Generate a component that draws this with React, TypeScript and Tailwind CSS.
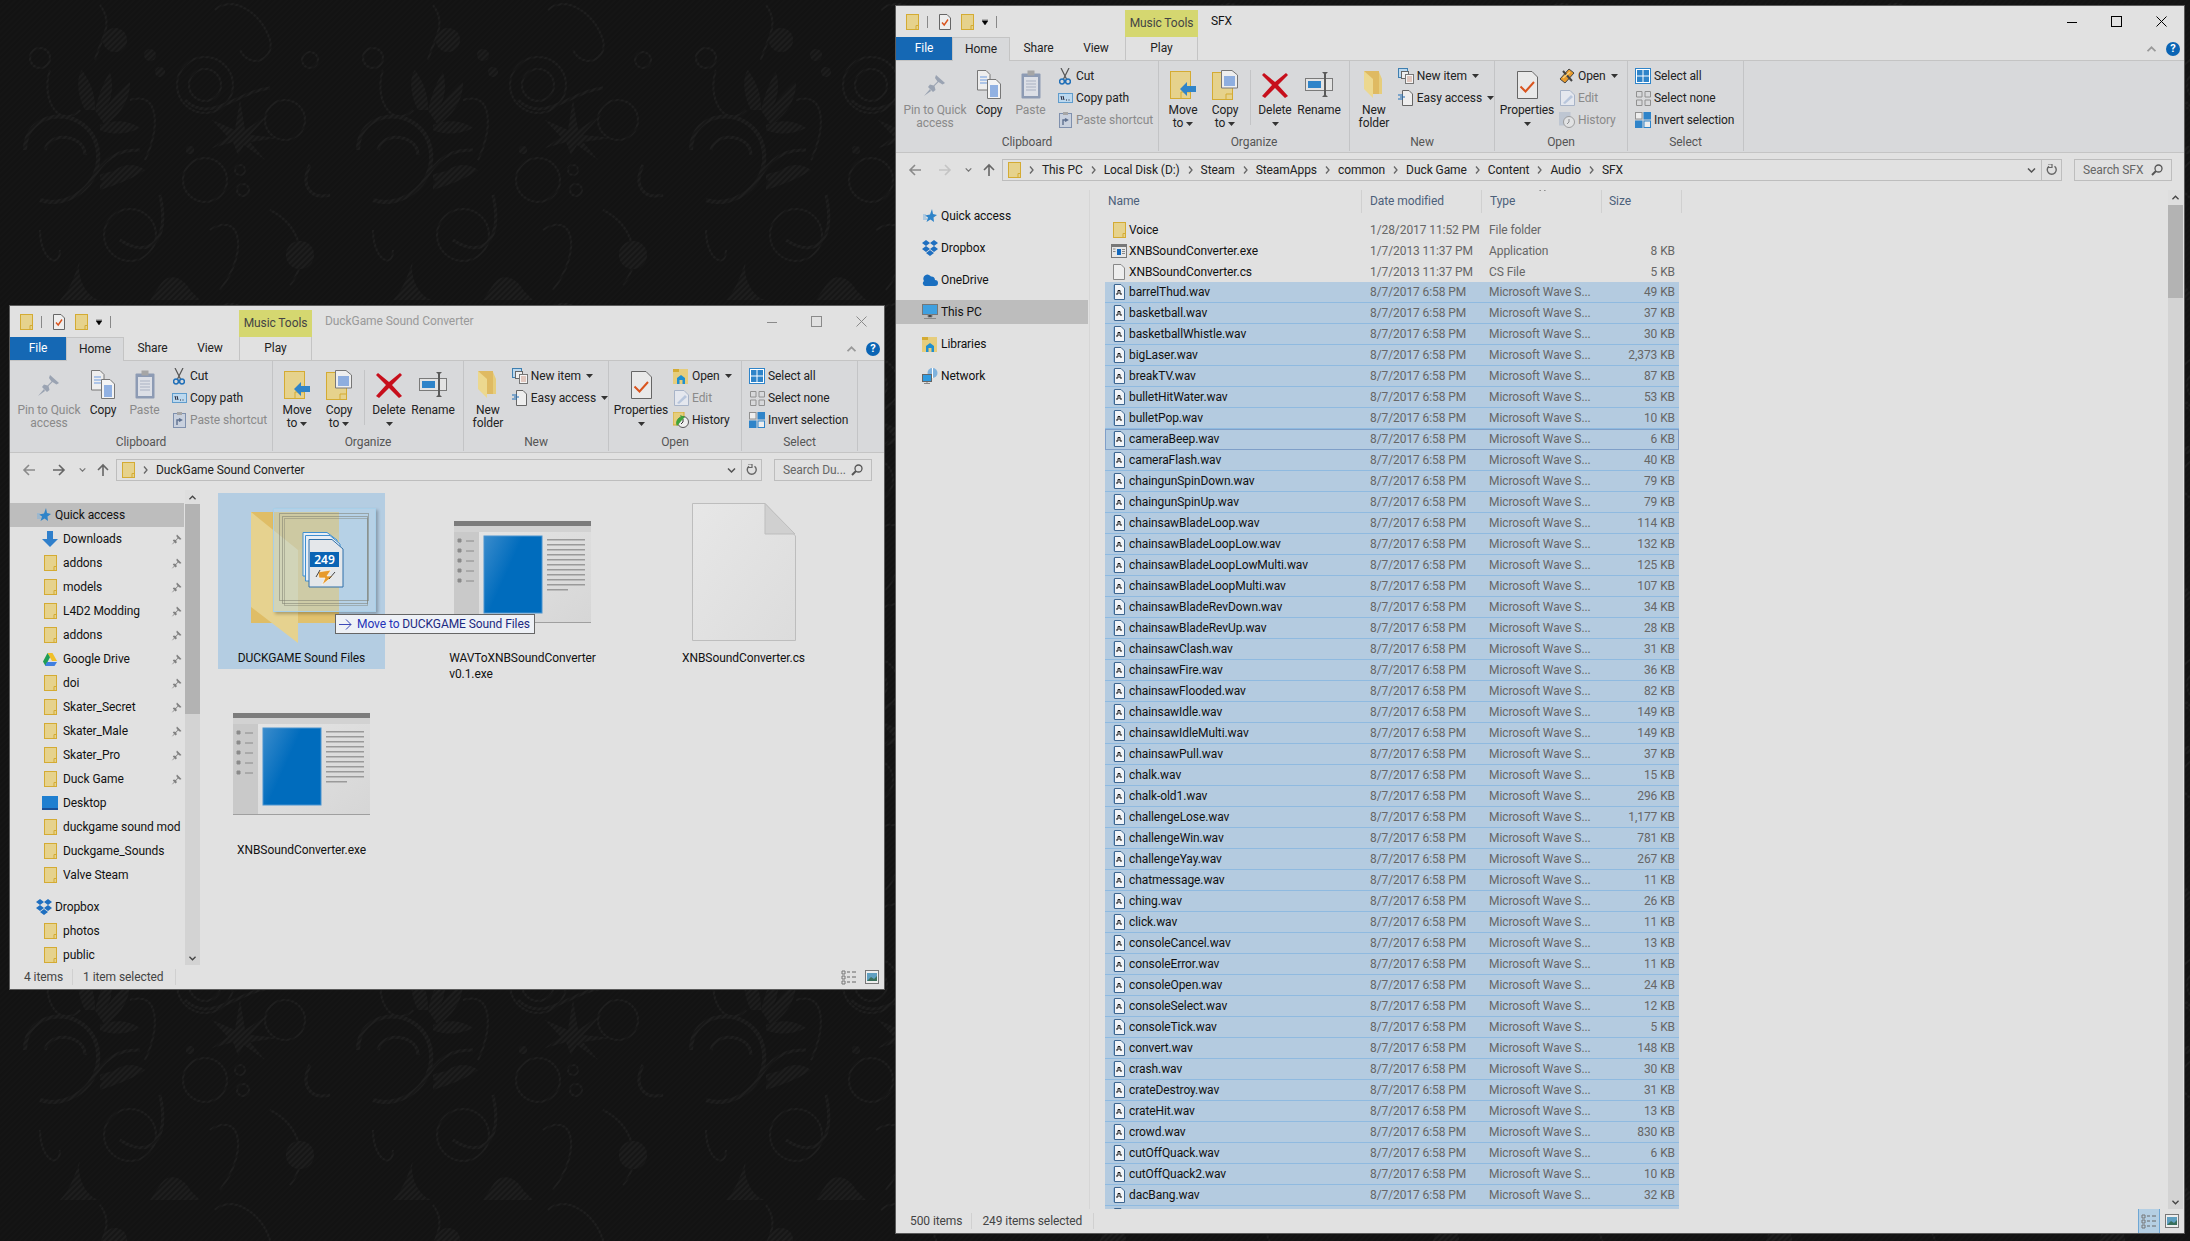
import React from "react";

type IconProps = { className?: string };

const FolderTiny = ({ className = "w-[13px] h-[16px]" }: IconProps) => (
  <svg viewBox="0 0 13 16" className={className}>
    <rect x="0.5" y="0.5" width="12" height="15" fill="#e6d28c" stroke="#d4ab33" />
    <path d="M10 15.5V11.5H12.5" fill="none" stroke="#d4ab33" />
  </svg>
);

const CheckDoc = () => (
  <svg viewBox="0 0 12 16" className="w-[12px] h-[16px]">
    <path d="M.5.5H8L11.5 4V15.5H.5Z" fill="#eee" stroke="#666" />
    <path d="M3 8.5L5.2 11L9 5.5" fill="none" stroke="#d9541e" strokeWidth="1.4" />
  </svg>
);

const PinBig = () => (
  <svg viewBox="0 0 24 24" className="w-[24px] h-[24px]">
    <path d="M13 2L22 10L19.5 11.5L15.5 9L11.5 13L12.5 17L10 19L5 14L7 11.5L10.5 12.5L14.5 8.5L12 5Z" fill="#9aa3b2" />
    <path d="M7 16L1 23L8 18Z" fill="#9aa3b2" />
  </svg>
);

const PinSmall = () => (
  <svg viewBox="0 0 11 11" className="w-[11px] h-[11px]">
    <path d="M6 .5L10.5 5L9 5.8L7.2 4.5L5.2 6.5L5.8 8.5L4.6 9.5L1.8 6.6L2.8 5.4L4.6 6L6.6 4L5.3 2.1Z" fill="#808080" />
    <path d="M3 8L.5 10.8L3.8 8.6Z" fill="#808080" />
  </svg>
);

const CopyBig = () => (
  <svg viewBox="0 0 24 29" className="w-[24px] h-[29px]">
    <path d="M.5.5H9L13 4.5V20H.5Z" fill="#eee" stroke="#777" />
    <path d="M3 7H10M3 10H10M3 13H10" stroke="#6d9be0" />
    <path d="M10.5 9.5H19L23.5 14V28.5H10.5Z" fill="#f4f4f4" stroke="#777" />
    <path d="M13 16H21M13 18H21M13 20H21M13 22H21M13 24H21M13 26H21" stroke="#2f6fd0" />
  </svg>
);

const PasteBig = () => (
  <svg viewBox="0 0 20 29" className="w-[20px] h-[29px]">
    <rect x=".5" y="3.5" width="19" height="25" rx="1" fill="#8d9bb4" />
    <rect x="3" y="7" width="14" height="19" fill="#dcdfe6" />
    <path d="M5 11H15M5 14H15M5 17H15M5 20H15" stroke="#a9b1c2" />
    <rect x="6.5" y=".5" width="7" height="5" fill="#a6a6a6" />
  </svg>
);

const Scissors = () => (
  <svg viewBox="0 0 12 17" className="w-[12px] h-[17px]">
    <path d="M2 0L7.5 11M10 0L4.5 11" stroke="#555" strokeWidth="1.2" />
    <circle cx="3" cy="13.5" r="2.4" fill="none" stroke="#1f6fb8" strokeWidth="1.5" />
    <circle cx="9" cy="13.5" r="2.4" fill="none" stroke="#1f6fb8" strokeWidth="1.5" />
  </svg>
);

const CopyPathIcon = () => (
  <svg viewBox="0 0 15 10" className="w-[15px] h-[10px]">
    <rect x=".5" y=".5" width="14" height="9" fill="#bcd8ee" stroke="#5f9ccc" />
    <path d="M3 3L4 7M5 3L6 7M8 7H9M10.5 7H11.5" stroke="#223" />
  </svg>
);

const PasteShortcut = () => (
  <svg viewBox="0 0 13 16" className="w-[13px] h-[16px]">
    <rect x=".5" y="1.5" width="12" height="14" fill="#c9d1de" stroke="#7f90ad" />
    <rect x="4" y="0" width="5" height="3" fill="#a6a6a6" />
    <path d="M4 13V8H8M6 6.5L8.5 8L6 9.5" fill="none" stroke="#5f7190" strokeWidth="1.4" />
  </svg>
);

const MoveToIcon = () => (
  <svg viewBox="0 0 27 28" className="w-[27px] h-[28px]">
    <rect x=".5" y=".5" width="20" height="27" fill="#e6d28c" stroke="#d4ab33" />
    <path d="M11 21V27M11 21H20" stroke="#d4ab33" fill="none" />
    <path d="M10 21L17 14V18H26V24H17V28Z" transform="translate(0 -3)" fill="#2f84c9" />
  </svg>
);

const CopyToIcon = () => (
  <svg viewBox="0 0 26 30" className="w-[26px] h-[30px]">
    <rect x=".5" y="2.5" width="20" height="27" fill="#e6d28c" stroke="#d4ab33" />
    <path d="M14 29V24H20" stroke="#d4ab33" fill="none" />
    <path d="M9.5.5H20L25.5 5V18H9.5Z" fill="#eee" stroke="#777" />
    <path d="M12 7H23M12 9H23M12 11H23M12 13H23M12 15H23" stroke="#2f6fd0" />
  </svg>
);

const DeleteIcon = () => (
  <svg viewBox="0 0 26 26" className="w-[26px] h-[26px]">
    <path d="M2 1L13 10L24 1L26 3L16 13L26 24L23 26L13 16L3 26L0 24L10 13L0 3Z" fill="#c70f1c" />
  </svg>
);

const RenameIcon = () => (
  <svg viewBox="0 0 28 27" className="w-[28px] h-[27px]">
    <rect x=".5" y="7.5" width="27" height="12" fill="#e3e3e3" stroke="#7a7a7a" />
    <rect x="3" y="10" width="13" height="7" fill="#2f84c9" />
    <path d="M17 1H23L21 3V24L23 26H17L19 24V3Z" fill="#5a5a5a" />
  </svg>
);

const NewFolderIcon = () => (
  <svg viewBox="0 0 19 27" className="w-[19px] h-[27px]">
    <path d="M0 0H15V23H6Z" fill="#dfba62" />
    <path d="M0 0L9 8V27L0 18Z" fill="#ecd88f" />
    <path d="M9 23H18V8L15 1V23Z" fill="#e6cd7c" />
  </svg>
);

const NewItemIcon = () => (
  <svg viewBox="0 0 16 16" className="w-[16px] h-[16px]">
    <rect x=".5" y=".5" width="9" height="9" fill="#bcd8ee" stroke="#3f7fb0" />
    <rect x="3.5" y="3.5" width="7" height="7" fill="#eee" stroke="#666" />
    <rect x="7.5" y="6.5" width="8" height="9" fill="#f4f4f4" stroke="#777" />
    <path d="M9 9H14M9 11H14M9 13H14" stroke="#c98" />
  </svg>
);

const EasyAccessIcon = () => (
  <svg viewBox="0 0 15 16" className="w-[15px] h-[16px]">
    <path d="M4.5.5H11L14.5 4V15.5H4.5Z" fill="#eee" stroke="#666" />
    <path d="M0 5H5M2 7H7M0 9H5" stroke="#1f6fb8" />
  </svg>
);

const PropertiesIcon = () => (
  <svg viewBox="0 0 21 28" className="w-[21px] h-[28px]">
    <path d="M.5.5H15L20.5 6V27.5H.5Z" fill="#e9e9e9" stroke="#666" />
    <path d="M3.5 15.5L8.5 20.5L17 11" fill="none" stroke="#d9541e" strokeWidth="2" />
  </svg>
);

const OpenOrange = () => (
  <svg viewBox="0 0 16 16" className="w-[16px] h-[16px]">
    <path d="M1 11L10 1L15 5L6 15Z" fill="#e79a2c" stroke="#444" />
    <path d="M4 3L13 13" stroke="#444" strokeWidth="2" />
    <path d="M4 10L11 4" stroke="#f6cf7a" strokeWidth="1.5" />
  </svg>
);

const LibraryIcon = () => (
  <svg viewBox="0 0 16 17" className="w-[16px] h-[17px]">
    <rect x="0" y="1" width="15" height="15" fill="#e6cd7c" />
    <rect x="0" y="1" width="6" height="3" fill="#d4ab33" />
    <path d="M4 16V10L8 7L12 10V16H9.5V12H6.5V16Z" fill="#1f8fd0" />
  </svg>
);

const EditIcon = () => (
  <svg viewBox="0 0 15 16" className="w-[15px] h-[16px]">
    <path d="M.5.5H10L14.5 5V15.5H.5Z" fill="#e4e7ee" stroke="#a8b4c8" />
    <path d="M3 13L11 5L13 7L5 14Z" fill="#b8c6dc" />
  </svg>
);

const HistoryIcon = ({ disabled }: { disabled?: boolean }) => (
  <svg viewBox="0 0 16 16" className="w-[16px] h-[16px]" opacity={disabled ? 0.45 : 1}>
    <rect x="0" y="0" width="11" height="13" fill={disabled ? "#9fb0c8" : "#e6cd7c"} stroke={disabled ? "#9fb0c8" : "#d4ab33"} />
    <circle cx="10" cy="10" r="5.5" fill="#eee" stroke="#555" />
    <path d="M10 7V10L8 12" fill="none" stroke="#333" />
    {!disabled && <path d="M4 14A6 6 0 0 1 8 5L7 3L12 5L9 8Z" fill="#3fa33a" />}
  </svg>
);

const SelectAllIcon = () => (
  <svg viewBox="0 0 16 16" className="w-[16px] h-[16px]">
    <rect x=".5" y=".5" width="15" height="15" fill="#fff" stroke="#2f84c9" />
    <rect x="2" y="2" width="5.5" height="5.5" fill="#2f84c9" />
    <rect x="8.5" y="2" width="5.5" height="5.5" fill="#2f84c9" />
    <rect x="2" y="8.5" width="5.5" height="5.5" fill="#2f84c9" />
    <rect x="8.5" y="8.5" width="5.5" height="5.5" fill="#2f84c9" />
  </svg>
);

const SelectNoneIcon = () => (
  <svg viewBox="0 0 15 15" className="w-[15px] h-[15px]">
    <path d="M.5.5H6V6H.5ZM9 .5H14.5V6H9ZM.5 9H6V14.5H.5ZM9 9H14.5V14.5H9Z" fill="none" stroke="#909090" />
  </svg>
);

const InvertIcon = () => (
  <svg viewBox="0 0 16 16" className="w-[16px] h-[16px]">
    <rect x=".5" y=".5" width="6.5" height="6.5" fill="#eee" stroke="#909090" />
    <rect x="9" y=".5" width="6.5" height="6.5" fill="#2f84c9" stroke="#2f84c9" />
    <rect x=".5" y="9" width="6.5" height="6.5" fill="#2f84c9" stroke="#2f84c9" />
    <rect x="9" y="9" width="6.5" height="6.5" fill="#eee" stroke="#2f84c9" />
  </svg>
);

const Caret = ({ muted }: { muted?: boolean }) => (
  <svg viewBox="0 0 7 4" className="inline-block w-[7px] h-[4px] align-middle">
    <path d="M0 0H7L3.5 4Z" fill={muted ? "#999" : "#333"} />
  </svg>
);

const StarIcon = () => (
  <svg viewBox="0 0 14 14" className="w-[14px] h-[14px]">
    <path d="M9 0L10 5L14 6L10.5 8.5L11 13L7.5 10.5L3.5 13L5 8.5L2 6.5L7 5.5Z" fill="#2f84c9" />
    <path d="M0 6H3M0 8H3M0 10H4" stroke="#7fb2dd" />
  </svg>
);

const DownloadIcon = () => (
  <svg viewBox="0 0 16 16" className="w-[16px] h-[16px]">
    <path d="M5 0H11V8H16L8 16L0 8H5Z" fill="#2f7fcb" />
  </svg>
);

const DriveIcon = () => (
  <svg viewBox="0 0 14 13" className="w-[14px] h-[13px]">
    <path d="M4.5 0H9.5L14 8H9Z" fill="#f0c02a" />
    <path d="M4.5 0L7 4.2L2.5 13L0 8.6Z" fill="#1f9d55" />
    <path d="M4 9H14L11.5 13H2Z" fill="#3f7fe0" />
  </svg>
);

const DesktopIcon = () => (
  <svg viewBox="0 0 16 16" className="w-[16px] h-[16px]">
    <rect width="16" height="14" y="1" fill="#1f7fd0" />
    <rect width="16" height="2" y="13" fill="#1a4f96" />
  </svg>
);

const DropboxIcon = () => (
  <svg viewBox="0 0 16 16" className="w-[16px] h-[16px]">
    <path d="M4 0L8 3L4 6L0 3ZM12 0L16 3L12 6L8 3ZM4 6L8 9L4 12L0 9ZM12 6L16 9L12 12L8 9ZM4 13L8 10L12 13L8 16Z" fill="#1f6fc0" />
  </svg>
);

const OneDriveIcon = () => (
  <svg viewBox="0 0 16 12" className="w-[16px] h-[12px]">
    <path d="M2 7A4 4 0 0 1 9 2.5A3.5 3.5 0 0 1 13 6A3 3 0 0 1 13 12H3A2.8 2.8 0 0 1 2 7Z" fill="#1a6fc0" />
  </svg>
);

const PcIcon = () => (
  <svg viewBox="0 0 16 16" className="w-[16px] h-[16px]">
    <rect x=".5" y=".5" width="15" height="10" fill="#3fa0e0" stroke="#777" />
    <path d="M6 11H10V13H6ZM2 14.5H14" stroke="#8a8a8a" />
  </svg>
);

const NetworkIcon = () => (
  <svg viewBox="0 0 16 16" className="w-[16px] h-[16px]">
    <circle cx="10.5" cy="5" r="5" fill="#7fb2dd" />
    <path d="M10.5 0V10" stroke="#fff" />
    <rect x=".5" y="6.5" width="9" height="7" fill="#2f9be0" stroke="#666" />
    <path d="M5 14V16M2 15.5H8" stroke="#888" />
  </svg>
);

const WaveIcon = () => (
  <svg viewBox="0 0 12 16" className="w-[12px] h-[16px]">
    <path d="M1.5 .5H8L11.5 4V15.5H1.5Z" fill="#f1f4f8" stroke="#3d6690" />
    <path d="M3 10H5V6.5H7V10H9" fill="none" stroke="#111" />
    <path d="M.5 1V15" stroke="#8fb4d8" />
  </svg>
);

const ExeSmall = () => (
  <svg viewBox="0 0 16 14" className="w-[16px] h-[14px]">
    <rect x=".5" y=".5" width="15" height="13" fill="#e6e6e6" stroke="#777" />
    <rect x="1" y="1" width="14" height="2" fill="#777" />
    <rect x="6" y="5" width="4" height="6" fill="#1268bd" />
    <path d="M11 5.5H14M11 7.5H14M11 9.5H14M2 5H4.5M2 7.5H4.5" stroke="#888" />
  </svg>
);

const PageSmall = () => (
  <svg viewBox="0 0 12 16" className="w-[12px] h-[16px]">
    <path d="M.5.5H8L11.5 4V15.5H.5Z" fill="#eee" stroke="#888" />
  </svg>
);

const ExeThumb = () => (
  <svg viewBox="0 0 137 102" className="w-[137px] h-[102px]">
    <defs>
      <linearGradient id="exeBlue" x1="0" y1="0" x2="1" y2="0.6">
        <stop offset="0" stopColor="#3b8ccc" />
        <stop offset="0.5" stopColor="#006cbd" />
      </linearGradient>
      <linearGradient id="exeBody" x1="0" y1="0" x2="1" y2="1">
        <stop offset="0" stopColor="#e6e6e6" />
        <stop offset="1" stopColor="#d6d6d6" />
      </linearGradient>
    </defs>
    <rect width="137" height="102" fill="url(#exeBody)" />
    <rect width="137" height="5" fill="#7c7c7c" />
    <rect y="5" width="137" height="6" fill="#d2d2d2" />
    <rect y="11" width="25" height="90" fill="#c9c9c9" />
    <rect x="30" y="15" width="58" height="77" fill="url(#exeBlue)" stroke="#4b94d0" />
    {[18, 28, 38, 48, 58].map((y) => (
      <path key={y} d="M4 0H7V3H4ZM12 2H20" transform={`translate(0 ${y})`} fill="#8a8a8a" stroke="#8a8a8a" strokeWidth="1" />
    ))}
    {[18, 23, 28, 33, 38, 43, 48, 53, 58, 63].map((y) => (
      <rect key={y} x="93" y={y} width="38" height="1.5" fill="#9a9a9a" />
    ))}
    <rect x="93" y="68" width="21" height="1.5" fill="#9a9a9a" />
    <rect y="101" width="137" height="1" fill="#9f9f9f" />
  </svg>
);

const PageThumb = () => (
  <svg viewBox="0 0 104 138" className="w-[104px] h-[138px]">
    <defs>
      <linearGradient id="pageFill" x1="0" y1="0" x2="1" y2="1">
        <stop offset="0" stopColor="#e7e7e7" />
        <stop offset="1" stopColor="#dcdcdc" />
      </linearGradient>
    </defs>
    <path d="M.5.5H73L103.5 33V137.5H.5Z" fill="url(#pageFill)" stroke="#bdbdbd" />
    <path d="M73 .5V31H103Z" fill="#d0d0d0" stroke="#bdbdbd" />
  </svg>
);

const DragFolder = () => (
  <div className="absolute left-[33px] top-[19px] w-[125px] h-[131px]">
    <svg viewBox="0 0 88 131" className="absolute left-0 top-0 w-[88px] h-[131px]">
      <path d="M0 0H88V111H47V111H0Z" fill="#dfbd66" />
      <path d="M0 0L47 38V131L0 95Z" fill="#e6d28f" />
      <path d="M47 38L88 20V111H47Z" fill="#e4c777" opacity="0.4" />
    </svg>
    <div className="absolute left-[22px] top-[-4px] w-[103px] h-[104px] bg-[#b8d6ea]/45 border border-[#a8cfe8] shadow-[2px_2px_3px_rgba(0,0,0,0.25)]">
      <div className="absolute left-[5px] top-[4px] w-[90px] h-[88px] border border-[#77776a]/50" />
      <div className="absolute left-[8px] top-[7px] w-[86px] h-[88px] border border-[#77776a]/50" />
      <div className="absolute left-[10px] top-[9px] w-[84px] h-[88px] border border-[#77776a]/40" />
      <svg viewBox="0 0 42 56" className="absolute left-[28px] top-[23px] w-[42px] h-[56px]">
        <path d="M1 .5H25L35 8V44H1Z" fill="#e8eef5" stroke="#3f8fd0" />
        <path d="M3.5 3.5H28L38 12V49H3.5Z" fill="#e8eef5" stroke="#3f8fd0" />
        <path d="M7 7.5H30L41 17V55H7Z" fill="#e4e7ea" stroke="#2f6fa8" />
        <rect x="8" y="20" width="29" height="15" fill="#0a64b4" />
        <text x="22.5" y="32" textAnchor="middle" fontSize="12" fontWeight="600" fill="#fff" fontFamily="'Noto Sans', sans-serif">249</text>
        <path d="M16 40L29 38L25 44H31L20 53L23 46H17Z" fill="#e79a2c" stroke="#fff" strokeWidth="0.6" />
        <path d="M14 45L18 38M27 47L33 40" stroke="#444" />
      </svg>
    </div>
  </div>
);

const NavArrow = ({ dir, color }: { dir: "left" | "right" | "up"; color: string }) => (
  <svg viewBox="0 0 14 14" className="w-[14px] h-[14px]">
    {dir === "left" && <path d="M13 7H2M7 2L2 7L7 12" fill="none" stroke={color} strokeWidth="1.6" />}
    {dir === "right" && <path d="M1 7H12M7 2L12 7L7 12" fill="none" stroke={color} strokeWidth="1.6" />}
    {dir === "up" && <path d="M7 13V2M2 7L7 2L12 7" fill="none" stroke={color} strokeWidth="1.6" />}
  </svg>
);

const Chevron = ({ up, className = "w-[8px] h-[5px]", color = "#555" }: { up?: boolean; className?: string; color?: string }) => (
  <svg viewBox="0 0 8 5" className={className}>
    <path d={up ? "M0.5 4.5L4 1L7.5 4.5" : "M0.5 0.5L4 4L7.5 0.5"} fill="none" stroke={color} strokeWidth="1.5" />
  </svg>
);

const CrumbSep = () => (
  <svg viewBox="0 0 5 8" className="w-[5px] h-[8px] mx-[8px]">
    <path d="M1 .5L4 4L1 7.5" fill="none" stroke="#666" strokeWidth="1.3" />
  </svg>
);

const Refresh = () => (
  <svg viewBox="0 0 12 12" className="w-[12px] h-[12px]">
    <path d="M8.5 2.2A4.5 4.5 0 1 1 3 2.2" fill="none" stroke="#666" strokeWidth="1.4" />
    <path d="M2 0H6V3.5H2" fill="none" stroke="#666" strokeWidth="1.2" />
  </svg>
);

const SearchIcon = () => (
  <svg viewBox="0 0 12 12" className="w-[12px] h-[12px]">
    <circle cx="7.5" cy="4.5" r="3.5" fill="none" stroke="#555" strokeWidth="1.3" />
    <path d="M5 7L1 11" stroke="#555" strokeWidth="2" />
  </svg>
);

const ViewIcons = ({ details }: { details?: boolean }) => (
  <div className="ml-auto flex items-center h-full">
    <div className={details ? "w-[22px] h-[24px] flex items-center justify-center bg-[#b5cfe3] border-x border-[#6ea6d4]" : "w-[22px] h-[24px] flex items-center justify-center"}>
      <svg viewBox="0 0 16 15" className="w-[16px] h-[15px]">
        <path d="M1 1H4V4H1ZM1 6H4V9H1ZM1 11H4V14H1Z" fill="none" stroke="#777" />
        <path d="M6 2H9M11 2H15M6 7H9M11 7H15M6 12H9M11 12H15" stroke="#666" />
      </svg>
    </div>
    <div className="w-[24px] h-[24px] flex items-center justify-center">
      <svg viewBox="0 0 14 14" className="w-[14px] h-[14px]">
        <rect x=".5" y=".5" width="13" height="13" fill="#eee" stroke="#777" />
        <rect x="2" y="3" width="10" height="8" fill="#5f9fc0" />
        <path d="M2 11L6 7L9 9L12 6V11Z" fill="#3a6f5a" />
      </svg>
    </div>
  </div>
);

const BigButton = ({ icon, label, width, disabled, caret }: { icon: React.ReactNode; label: string; width: string; disabled?: boolean; caret?: boolean }) => (
  <div className={`${width} flex flex-col items-center`}>
    <div className="h-[39px] flex items-center justify-center shrink-0">{icon}</div>
    <div className={disabled ? "text-center leading-[13px] whitespace-pre-line text-[#8a8a8a]" : "text-center leading-[13px] whitespace-pre-line text-[#222]"}>
      {label}
      {caret && (
        <>
          {" "}
          <Caret />
        </>
      )}
    </div>
  </div>
);

const SmallButton = ({ icon, label, disabled, caret }: { icon: React.ReactNode; label: string; disabled?: boolean; caret?: boolean }) => (
  <div className="h-[22px] flex items-center whitespace-nowrap">
    <span className="w-[16px] flex justify-center shrink-0">{icon}</span>
    <span className={disabled ? "ml-[3px] text-[#8a8a8a]" : "ml-[3px] text-[#222]"}>{label}</span>
    {caret && (
      <span className="ml-[5px] flex">
        <Caret />
      </span>
    )}
  </div>
);

const Group = ({ label, width, children }: { label: string; width: string; children: React.ReactNode }) => (
  <div className={`${width} h-full flex flex-col border-r border-[#c3c4c6] shrink-0`}>
    <div className="flex-1 flex pt-[4px]">{children}</div>
    <div className="h-[18px] leading-[18px] text-center text-[#555]">{label}</div>
  </div>
);

const Ribbon = ({ sfx }: { sfx?: boolean }) => (
  <div className="h-[92px] bg-[#d8d9db] border-b border-[#c4c4c4] flex shrink-0 pb-[1px]">
    <Group label="Clipboard" width="w-[263px]">
      <BigButton width="w-[78px]" icon={<PinBig />} label={"Pin to Quick\naccess"} disabled />
      <BigButton width="w-[30px]" icon={<CopyBig />} label="Copy" />
      <BigButton width="w-[53px]" icon={<PasteBig />} label="Paste" disabled />
      <div className="flex flex-col">
        <SmallButton icon={<Scissors />} label="Cut" />
        <SmallButton icon={<CopyPathIcon />} label="Copy path" />
        <SmallButton icon={<PasteShortcut />} label="Paste shortcut" disabled />
      </div>
    </Group>
    <Group label="Organize" width="w-[191px]">
      <BigButton width="w-[48px]" icon={<MoveToIcon />} label={"Move\nto"} caret />
      <BigButton width="w-[36px]" icon={<CopyToIcon />} label={"Copy\nto"} caret />
      <div className="w-[8px] h-[55px] border-r border-[#c3c4c6] mt-[5px]" />
      <BigButton width="w-[48px]" icon={<DeleteIcon />} label={"Delete\n"} caret />
      <BigButton width="w-[40px]" icon={<RenameIcon />} label="Rename" />
    </Group>
    <Group label="New" width="w-[145px]">
      <BigButton width="w-[48px]" icon={<NewFolderIcon />} label={"New\nfolder"} />
      <div className="flex flex-col">
        <SmallButton icon={<NewItemIcon />} label="New item" caret />
        <SmallButton icon={<EasyAccessIcon />} label="Easy access" caret />
      </div>
    </Group>
    <Group label="Open" width="w-[133px]">
      <BigButton width="w-[64px]" icon={<PropertiesIcon />} label={"Properties\n"} caret />
      <div className="flex flex-col">
        <SmallButton icon={sfx ? <OpenOrange /> : <LibraryIcon />} label="Open" caret />
        <SmallButton icon={<EditIcon />} label="Edit" disabled />
        <SmallButton icon={<HistoryIcon disabled={sfx} />} label="History" disabled={sfx} />
      </div>
    </Group>
    <Group label="Select" width="w-[116px]">
      <div className="flex flex-col pl-[7px]">
        <SmallButton icon={<SelectAllIcon />} label="Select all" />
        <SmallButton icon={<SelectNoneIcon />} label="Select none" />
        <SmallButton icon={<InvertIcon />} label="Invert selection" />
      </div>
    </Group>
  </div>
);

const Scrollbar = ({ thumb, arrow }: { thumb: string; arrow: string }) => (
  <div className="w-[15px] h-full bg-[#d3d3d3] flex flex-col shrink-0">
    <div className={`${arrow} flex items-center justify-center bg-[#dedede]`}>
      <Chevron up className="w-[7px] h-[5px]" color="#444" />
    </div>
    <div className={`${thumb} bg-[#b3b3b3]`} />
    <div className="flex-1" />
    <div className="h-[14px] flex items-center justify-center">
      <Chevron className="w-[7px] h-[5px]" color="#444" />
    </div>
  </div>
);

const NavRow = ({ icon, label, indent, pinned, selected }: { icon: React.ReactNode; label: string; indent?: boolean; pinned?: boolean; selected?: boolean }) => (
  <div className={`h-[24px] flex items-center whitespace-nowrap overflow-hidden ${selected ? "bg-[#bdbdbd] mr-[1px]" : ""} ${indent ? "pl-[32px]" : "pl-[26px]"}`}>
    <span className="w-[16px] flex justify-center shrink-0">{icon}</span>
    <span className={indent ? "ml-[5px] text-[#111]" : "ml-[3px] text-[#111]"}>{label}</span>
    {pinned && (
      <span className="ml-auto pr-[3px] flex">
        <PinSmall />
      </span>
    )}
  </div>
);

const WindowFrame = ({ className, title, active, sfx, children, address, search, status, details }: { className: string; title: string; active?: boolean; sfx?: boolean; children: React.ReactNode; address: React.ReactNode; search: string; status: string[]; details?: boolean }) => {
  const ctl = active ? "#000" : "#8a8a8a";
  return (
    <div className={`absolute ${className} bg-[#e1e1e1] border border-[#5a5a5a] flex flex-col overflow-hidden`}>
      {/* title row */}
      <div className="h-[31px] flex shrink-0">
        <div className="w-[229px] flex items-center pl-[10px] shrink-0">
          <FolderTiny />
          <span className="w-[1px] h-[12px] bg-[#888] ml-[8px]" />
          <span className="ml-[11px] flex">
            <CheckDoc />
          </span>
          <span className="ml-[10px] flex">
            <FolderTiny />
          </span>
          <svg viewBox="0 0 7 7" className="w-[6px] h-[6px] ml-[8px]">
            <path d="M0 0H7M0 2H7L3.5 7Z" fill="#000" stroke="#000" strokeWidth="0.5" />
          </svg>
          <span className="w-[1px] h-[12px] bg-[#888] ml-[8px]" />
        </div>
        <div className="w-[73px] h-[27px] mt-[4px] bg-[#d5d770] text-[#444] text-center leading-[27px] shrink-0">Music Tools</div>
        <div className={active ? "pl-[13px] leading-[31px] text-[#111]" : "pl-[13px] leading-[31px] text-[#999]"}>{title}</div>
        <div className="ml-auto flex items-center h-full pr-[17px] gap-[34px]">
          <svg viewBox="0 0 10 10" className="w-[10px] h-[10px]">
            <path d="M0 5.5H10" stroke={ctl} />
          </svg>
          <svg viewBox="0 0 11 11" className="w-[11px] h-[11px]">
            <rect x=".5" y=".5" width="10" height="10" fill="none" stroke={ctl} />
          </svg>
          <svg viewBox="0 0 11 11" className="w-[11px] h-[11px]">
            <path d="M.5.5L10.5 10.5M10.5.5L.5 10.5" stroke={ctl} />
          </svg>
        </div>
      </div>
      {/* tabs */}
      <div className="h-[24px] flex shrink-0 border-b border-[#c4c4c4] text-[#222]">
        <div className="w-[56px] bg-[#1568b4] text-white text-center leading-[23px]">File</div>
        <div className="w-[58px] bg-[#d8d9db] border-x border-t border-[#c4c4c4] h-[24px] text-center leading-[23px] relative z-10">Home</div>
        <div className="w-[57px] text-center leading-[23px]">Share</div>
        <div className="w-[58px] text-center leading-[23px]">View</div>
        <div className="w-[73px] border-x border-[#c4c4c4] text-center leading-[23px]">Play</div>
        <div className="ml-auto flex items-center pr-[4px]">
          <Chevron up className="w-[9px] h-[6px]" color="#999" />
          <span className="ml-[10px] w-[14px] h-[14px] rounded-full bg-[#0a64b4] text-white text-[11px] font-bold leading-[14px] text-center">?</span>
        </div>
      </div>
      <Ribbon sfx={sfx} />
      {/* address row */}
      <div className="h-[37px] flex items-start pt-[6px] shrink-0">
        <div className="w-[106px] h-[22px] flex items-center pl-[12px] shrink-0">
          <NavArrow dir="left" color="#8a8a8a" />
          <span className="ml-[16px] flex">
            <NavArrow dir="right" color={active ? "#c4c4c4" : "#666"} />
          </span>
          <span className="ml-[13px] flex">
            <Chevron className="w-[7px] h-[4px]" color="#777" />
          </span>
          <span className="ml-[10px] flex">
            <NavArrow dir="up" color="#666" />
          </span>
        </div>
        <div className="flex-1 h-[22px] border border-[#bdbdbd] flex items-center pl-[5px] min-w-0">
          <FolderTiny />
          {address}
          <div className="ml-auto flex items-center h-full">
            <Chevron className="w-[9px] h-[5px] mr-[5px]" color="#555" />
            <div className="w-[20px] h-full border-l border-[#bdbdbd] flex items-center justify-center">
              <Refresh />
            </div>
          </div>
        </div>
        <div className="w-[98px] h-[22px] border border-[#bdbdbd] ml-[12px] mr-[12px] flex items-center justify-between px-[8px] text-[#666] shrink-0">
          <span>{search}</span>
          <SearchIcon />
        </div>
      </div>
      <div className="flex-1 flex min-h-0">{children}</div>
      {/* status bar */}
      <div className="h-[24px] flex items-center shrink-0 text-[#444]">
        <span className="pl-[14px] pr-[9px] border-r border-[#d0d0d0] leading-[16px]">{status[0]}</span>
        <span className="pl-[10px] pr-[11px] border-r border-[#d0d0d0] leading-[16px]">{status[1]}</span>
        <ViewIcons details={details} />
      </div>
    </div>
  );
};

const quickAccess: [string, React.ReactNode, boolean][] = [
  ["Downloads", <DownloadIcon />, true],
  ["addons", <FolderTiny />, true],
  ["models", <FolderTiny />, true],
  ["L4D2 Modding", <FolderTiny />, true],
  ["addons", <FolderTiny />, true],
  ["Google Drive", <DriveIcon />, true],
  ["doi", <FolderTiny />, true],
  ["Skater_Secret", <FolderTiny />, true],
  ["Skater_Male", <FolderTiny />, true],
  ["Skater_Pro", <FolderTiny />, true],
  ["Duck Game", <FolderTiny />, true],
  ["Desktop", <DesktopIcon />, false],
  ["duckgame sound mod", <FolderTiny />, false],
  ["Duckgame_Sounds", <FolderTiny />, false],
  ["Valve Steam", <FolderTiny />, false],
];

const IconTile = ({ label, selected, children }: { label: string; selected?: boolean; children: React.ReactNode }) => (
  <div className={`relative w-[167px] h-[176px] ${selected ? "bg-[#b4cde2]" : ""}`}>
    <div className="h-[157px] flex items-center justify-center pt-[1px]">{children}</div>
    <div className="flex justify-center leading-[16px]">
      <div className="text-[#111] whitespace-pre-line">{label}</div>
    </div>
  </div>
);

const ConverterWindow = () => (
  <WindowFrame
    className="left-[9px] top-[305px] w-[876px] h-[685px]"
    title="DuckGame Sound Converter"
    search="Search Du..."
    status={["4 items", "1 item selected"]}
    address={
      <>
        <CrumbSep />
        <span className="text-[#222] whitespace-nowrap">DuckGame Sound Converter</span>
      </>
    }
  >
    <div className="w-[175px] pt-[13px] overflow-hidden shrink-0">
      <NavRow icon={<StarIcon />} label="Quick access" selected />
      {quickAccess.map(([name, icon, pinned], i) => (
        <NavRow key={i} indent icon={icon} label={name} pinned={pinned} />
      ))}
      <div className="h-[8px]" />
      <NavRow icon={<DropboxIcon />} label="Dropbox" />
      <NavRow indent icon={<FolderTiny />} label="photos" />
      <NavRow indent icon={<FolderTiny />} label="public" />
    </div>
    <Scrollbar thumb="h-[210px]" arrow="h-[14px]" />
    <div className="flex-1 pl-[18px] pt-[3px] grid grid-cols-[167px_167px_167px] auto-rows-[176px] gap-x-[54px] gap-y-[16px] content-start relative">
      <IconTile label="DUCKGAME Sound Files" selected>
        <DragFolder />
        <div className="absolute left-[117px] top-[121px] h-[20px] w-[200px] flex items-center bg-[#eef1f6] border border-[#666] z-10 whitespace-nowrap pl-[3px]">
          <svg viewBox="0 0 13 11" className="w-[13px] h-[11px] mr-[5px]">
            <path d="M0 5.5H12M7 .5L12 5.5L7 10.5" fill="none" stroke="#3b48b8" />
          </svg>
          <span className="text-[#2433b8]">Move to&nbsp;</span>
          <span className="text-[#1c2a80]">DUCKGAME Sound Files</span>
        </div>
      </IconTile>
      <IconTile label={"WAVToXNBSoundConverter\nv0.1.exe"}>
        <ExeThumb />
      </IconTile>
      <IconTile label="XNBSoundConverter.cs">
        <PageThumb />
      </IconTile>
      <IconTile label="XNBSoundConverter.exe">
        <ExeThumb />
      </IconTile>
    </div>
  </WindowFrame>
);

const crumbs = ["This PC", "Local Disk (D:)", "Steam", "SteamApps", "common", "Duck Game", "Content", "Audio", "SFX"];

const waves: [string, string][] = [
  ["barrelThud", "49"], ["basketball", "37"], ["basketballWhistle", "30"], ["bigLaser", "2,373"], ["breakTV", "87"],
  ["bulletHitWater", "53"], ["bulletPop", "10"], ["cameraBeep", "6"], ["cameraFlash", "40"], ["chaingunSpinDown", "79"],
  ["chaingunSpinUp", "79"], ["chainsawBladeLoop", "114"], ["chainsawBladeLoopLow", "132"], ["chainsawBladeLoopLowMulti", "125"],
  ["chainsawBladeLoopMulti", "107"], ["chainsawBladeRevDown", "34"], ["chainsawBladeRevUp", "28"], ["chainsawClash", "31"],
  ["chainsawFire", "36"], ["chainsawFlooded", "82"], ["chainsawIdle", "149"], ["chainsawIdleMulti", "149"], ["chainsawPull", "37"],
  ["chalk", "15"], ["chalk-old1", "296"], ["challengeLose", "1,177"], ["challengeWin", "781"], ["challengeYay", "267"],
  ["chatmessage", "11"], ["ching", "26"], ["click", "11"], ["consoleCancel", "13"], ["consoleError", "11"], ["consoleOpen", "24"],
  ["consoleSelect", "12"], ["consoleTick", "5"], ["convert", "148"], ["crash", "30"], ["crateDestroy", "31"], ["crateHit", "13"],
  ["crowd", "830"], ["cutOffQuack", "6"], ["cutOffQuack2", "10"], ["dacBang", "32"],
];

const FileRow = ({ icon, name, date, type, size, selected, focused }: { icon: React.ReactNode; name: string; date: string; type: string; size: string; selected?: boolean; focused?: boolean }) => (
  <div className={`h-[21px] w-[574px] flex items-center whitespace-nowrap ${selected ? "bg-[#b4cbe0] border-b border-[#8fbae0]" : ""} ${focused ? "outline outline-[#7f9fc8] -outline-offset-1" : ""}`}>
    <span className="w-[24px] pl-[4px] flex justify-center shrink-0">{icon}</span>
    <span className="w-[241px] text-[#111] shrink-0">{name}</span>
    <span className="w-[119px] text-[#666] shrink-0">{date}</span>
    <span className="w-[114px] text-[#666] shrink-0">{type}</span>
    <span className="w-[72px] text-[#666] text-right shrink-0">{size}</span>
  </div>
);

const SfxWindow = () => (
  <WindowFrame
    className="left-[895px] top-[5px] w-[1290px] h-[1229px]"
    title="SFX"
    active
    sfx
    details
    search="Search SFX"
    status={["500 items", "249 items selected"]}
    address={
      <div className="flex items-center whitespace-nowrap text-[#222]">
        {crumbs.map((c) => (
          <React.Fragment key={c}>
            <CrumbSep />
            <span>{c}</span>
          </React.Fragment>
        ))}
      </div>
    }
  >
    <div className="w-[194px] pt-[14px] flex flex-col gap-[8px] border-r border-[#d6d6d6] shrink-0">
      <NavRow icon={<StarIcon />} label="Quick access" />
      <NavRow icon={<DropboxIcon />} label="Dropbox" />
      <NavRow icon={<OneDriveIcon />} label="OneDrive" />
      <NavRow icon={<PcIcon />} label="This PC" selected />
      <NavRow icon={<LibraryIcon />} label="Libraries" />
      <NavRow icon={<NetworkIcon />} label="Network" />
    </div>
    <div className="flex-1 flex flex-col min-w-0 pl-[15px] overflow-hidden">
      <div className="h-[23px] flex text-[#4c607a] shrink-0">
        <div className="w-[257px] pl-[3px] border-r border-[#d0d0d0] leading-[23px]">Name</div>
        <div className="w-[120px] pl-[8px] border-r border-[#d0d0d0] leading-[23px]">Date modified</div>
        <div className="relative w-[120px] pl-[8px] border-r border-[#d0d0d0] leading-[23px]">
          Type
          <span className="absolute left-[57px] top-[-3px] flex">
            <Chevron up className="w-[7px] h-[4px]" color="#666" />
          </span>
        </div>
        <div className="w-[80px] pl-[7px] border-r border-[#d0d0d0] leading-[23px]">Size</div>
      </div>
      <div className="flex-1 pt-[6px] overflow-hidden">
        <FileRow icon={<FolderTiny />} name="Voice" date="1/28/2017 11:52 PM" type="File folder" size="" />
        <FileRow icon={<ExeSmall />} name="XNBSoundConverter.exe" date="1/7/2013 11:37 PM" type="Application" size="8 KB" />
        <FileRow icon={<PageSmall />} name="XNBSoundConverter.cs" date="1/7/2013 11:37 PM" type="CS File" size="5 KB" />
        {waves.map(([name, kb]) => (
          <FileRow key={name} selected focused={name === "cameraBeep"} icon={<WaveIcon />} name={`${name}.wav`} date="8/7/2017 6:58 PM" type="Microsoft Wave S..." size={`${kb} KB`} />
        ))}
        <FileRow selected icon={<WaveIcon />} name="" date="" type="" size="" />
      </div>
    </div>
    <div className="pr-[1px] shrink-0 h-full flex">
      <Scrollbar thumb="h-[93px]" arrow="h-[15px]" />
    </div>
  </WindowFrame>
);

// damask wallpaper, one tile repeated
const Wallpaper = () => (
  <svg className="absolute inset-0 w-full h-full">
    <defs>
      <pattern id="stripes" width="4" height="4" patternUnits="userSpaceOnUse" patternTransform="rotate(45)">
        <rect width="2" height="4" fill="#111" />
      </pattern>
      <pattern id="damask" width="333" height="300" patternUnits="userSpaceOnUse">
        <g fill="none" stroke="#1f1f1f" strokeWidth="2">
          <path d="M25 150C25 110 80 105 95 140C110 180 70 210 40 200" strokeWidth="4" />
          <path d="M45 150C50 130 85 135 85 155" strokeWidth="3" />
          <path d="M95 175C110 150 130 150 140 150" strokeWidth="3" />
          <path d="M50 70C40 100 60 130 80 110" />
          <circle cx="40" cy="58" r="10" />
          <path d="M130 100C160 90 160 130 145 160" />
          <circle cx="205" cy="85" r="28" />
          <circle cx="205" cy="85" r="16" />
          <path d="M185 100C210 125 240 90 270 88" strokeWidth="3" />
          <circle cx="285" cy="120" r="20" />
          <circle cx="310" cy="60" r="8" />
          <circle cx="240" cy="170" r="5" />
          <circle cx="243" cy="190" r="6" />
          <path d="M310 165C300 185 310 200 330 195" strokeWidth="3" />
          <path d="M210 230C240 210 250 250 220 290" />
          <path d="M40 230C40 260 60 270 60 250" />
          <path d="M160 195C170 240 150 260 120 240" strokeWidth="3" />
          <path d="M215 10C230 -5 260 10 270 40C275 60 250 70 240 50" />
          <path d="M100 5C115 25 100 40 95 60" />
          <circle cx="205" cy="180" r="22" />
          <circle cx="130" cy="235" r="26" />
          <path d="M270 210C300 225 310 260 290 285" />
        </g>
        <g fill="#1e1e1e">
          <path d="M85 110C75 90 78 75 82 70C92 85 95 95 95 110Z" />
          <path d="M95 110C100 90 105 80 110 72C115 90 110 105 100 118Z" />
          <path d="M100 118C110 100 120 90 130 82C130 100 120 115 105 125Z" />
          <path d="M100 125C120 118 130 122 140 128C125 135 110 135 100 130Z" />
          <path d="M100 185C115 165 130 160 145 170C130 180 115 185 100 190Z" />
          <path d="M100 175C110 170 125 170 130 178C120 182 110 182 100 180Z" />
          <path d="M235 130L240 100L245 130L268 115L250 135L278 138L250 142L265 160L244 145L238 155L233 142L212 148L228 137L212 120Z" />
          <circle cx="150" cy="55" r="6" />
          <circle cx="160" cy="72" r="5" />
          <circle cx="115" cy="40" r="12" />
          <circle cx="190" cy="150" r="4" />
          <circle cx="300" cy="255" r="14" />
          <path d="M80 260C75 280 90 300 100 300L60 300C70 290 75 275 80 260Z" />
          <path d="M160 285C170 270 185 280 190 290L200 300H150Z" />
        </g>
      </pattern>
    </defs>
    <rect width="100%" height="100%" fill="url(#damask)" />
    <rect width="100%" height="100%" fill="url(#stripes)" opacity="0.6" />
  </svg>
);

export default function App() {
  return (
    <div className="relative w-[2190px] h-[1241px] overflow-hidden bg-[#151515] font-['Roboto',sans-serif] text-[12px] tracking-[-0.08px]">
      <Wallpaper />
      <ConverterWindow />
      <SfxWindow />
    </div>
  );
}
